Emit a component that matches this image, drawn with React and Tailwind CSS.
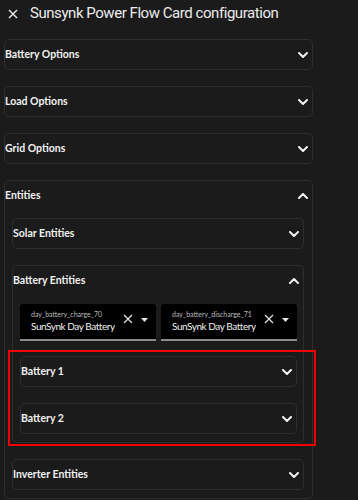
import React from "react";

const Chevron = ({ up }) => (
  <svg width="10" height="6" viewBox="0 0 10 6" className="shrink-0">
    <polyline
      points={up ? "1,5 5,1 9,5" : "1,1 5,5 9,1"}
      fill="none"
      stroke="#f2f2f2"
      strokeWidth="2"
      strokeLinecap="round"
      strokeLinejoin="round"
    />
  </svg>
);

const Header = ({ label, up }) => (
  <div className="h-[29px] flex items-center justify-between pr-[4px]">
    <span className="text-[10.5px] font-bold text-[#f2f2f2] leading-none">{label}</span>
    <Chevron up={up} />
  </div>
);

const Panel = ({ label, up, children }) => (
  <div className="border border-[#2e2e2e] rounded-[5px]">
    <Header label={label} up={up} />
    {children}
  </div>
);

const Picker = ({ small, value }) => (
  <div className="w-[136px] h-[37px] bg-black border-b-2 border-[#8c8c8c] rounded-t-[3px] flex items-center pl-[11px] pr-[8px]">
    <div className="flex-1 min-w-0 flex flex-col">
      <span className="text-[7px] text-[#bdbdbd] leading-[9px]">{small}</span>
      <span className="text-[10px] tracking-[-0.45px] text-[#f0f0f0] leading-[14px] whitespace-nowrap overflow-hidden w-[84px]">{value}</span>
    </div>
    <svg width="10" height="10" viewBox="0 0 10 10" className="shrink-0 mr-[8px] -mt-[6px]">
      <path d="M1 1 L9 9 M9 1 L1 9" stroke="#e6e6e6" strokeWidth="1.2" />
    </svg>
    <svg width="7" height="4" viewBox="0 0 7 4" className="shrink-0 -mt-[3px]">
      <path d="M0 0 L7 0 L3.5 4 Z" fill="#e6e6e6" />
    </svg>
  </div>
);

export default function App() {
  return (
    <div
      className="w-[358px] h-[500px] bg-[#1b1b1b] overflow-hidden relative"
      style={{ fontFamily: 'Lato, "Noto Sans", sans-serif' }}
    >
      <div className="h-[39px] flex items-start pt-[2px] pl-[8px]">
        <svg width="10" height="10" viewBox="0 0 10 10" className="mt-[7px] shrink-0">
          <path d="M1 1 L9 9 M9 1 L1 9" stroke="#ededed" strokeWidth="1.4" />
        </svg>
        <span
          className="ml-[12px] text-[15px] tracking-[-0.45px] text-[#ececec] leading-[22px]"
          style={{ fontFamily: 'Roboto, sans-serif' }}
        >
          Sunsynk Power Flow Card configuration
        </span>
      </div>
      <div className="pl-[4px] w-[313px] flex flex-col gap-[16px]">
        <Panel label="Battery Options" />
        <Panel label="Load Options" />
        <Panel label="Grid Options" />
        <Panel label="Entities" up>
          <div className="pl-[7px] pr-[8px] pt-[8px] pb-[8px] flex flex-col gap-[16px]">
            <Panel label="Solar Entities" />
            <Panel label="Battery Entities" up>
              <div className="pl-[7px] pr-[6px] pt-[9px] pb-[8px] flex flex-col">
                <div className="flex gap-[5px]">
                  <Picker small="day_battery_charge_70" value="SunSynk Day Battery Charge" />
                  <Picker small="day_battery_discharge_71" value="SunSynk Day Battery Discharge" />
                </div>
                <div className="mt-[15px] flex flex-col gap-[16px]">
                  <Panel label="Battery 1" />
                  <Panel label="Battery 2" />
                </div>
              </div>
            </Panel>
            <Panel label="Inverter Entities" />
          </div>
        </Panel>
      </div>
      <div className="absolute left-[8px] top-[350px] w-[308px] h-[96px] border-[2.5px] border-[#f00000] pointer-events-none" />
    </div>
  );
}
